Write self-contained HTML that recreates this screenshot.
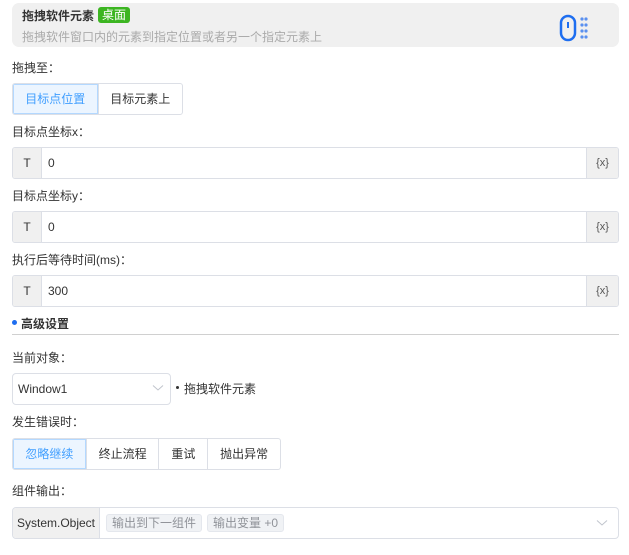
<!DOCTYPE html>
<html><head><meta charset="utf-8"><style>
*{box-sizing:border-box;margin:0;padding:0}
body{width:629px;height:555px;background:#fff;font-family:"Liberation Sans","Noto Sans CJK SC",sans-serif;font-size:12px;color:#333;position:relative;overflow:hidden}
.a{position:absolute}
.lbl{position:absolute;left:12px;font-size:12px;color:#333}
.inp{position:absolute;left:12px;width:607px;height:32px;border:1px solid #dcdfe6;border-radius:3px;overflow:hidden}
.inp .t{position:absolute;left:0;top:0;width:29px;height:30px;background:#f0f0f0;border-right:1px solid #dcdfe6;text-align:center;line-height:30px;color:#333;font-weight:normal}
.inp .v{position:absolute;left:35px;top:0;line-height:30px;color:#333}
.inp .x{position:absolute;right:0;top:0;width:32px;height:30px;background:#f0f0f0;border-left:1px solid #dcdfe6;text-align:center;line-height:30px;color:#555;font-size:11px}
.bg{position:absolute;display:flex;border:1px solid #dcdfe6;border-radius:3px;overflow:hidden;height:32px}
.bg div{line-height:30px;text-align:center;border-left:1px solid #dcdfe6;color:#333}
.bg div:first-child{border-left:none;background:#ecf5ff;color:#409eff;box-shadow:inset 0 0 0 1px #b3d8ff}
</style></head><body>
<div class="a" style="left:12px;top:3px;width:607px;height:44px;background:#f0f0f0;border-radius:7px"></div>
<div class="a" style="left:22px;top:7px;font-weight:bold;font-size:12px;color:#333">拖拽软件元素</div>
<div class="a" style="left:98px;top:7px;width:32px;height:16px;background:#3cb521;border-radius:3px;color:#fff;font-size:12px;line-height:16px;text-align:center">桌面</div>
<div class="a" style="left:22px;top:28px;color:#aaa;font-size:12px">拖拽软件窗口内的元素到指定位置或者另一个指定元素上</div>
<svg class="a" style="left:558px;top:14px" width="34" height="28" viewBox="0 0 34 28">
<rect x="3" y="2" width="14" height="24" rx="7" fill="none" stroke="#1e6ef0" stroke-width="2.5"/>
<line x1="10" y1="8" x2="10" y2="14" stroke="#1e6ef0" stroke-width="2"/>
<g fill="#5a90ef"><circle cx="24" cy="5" r="1.6"/><circle cx="28" cy="5" r="1.6"/><circle cx="24" cy="11" r="1.6"/><circle cx="28" cy="11" r="1.6"/><circle cx="24" cy="17" r="1.6"/><circle cx="28" cy="17" r="1.6"/><circle cx="24" cy="23" r="1.6"/><circle cx="28" cy="23" r="1.6"/></g>
</svg>
<div class="lbl" style="top:59px">拖拽至：</div>
<div class="bg" style="left:12px;top:83px;width:171px"><div style="width:85px">目标点位置</div><div style="width:85px">目标元素上</div></div>
<div class="lbl" style="top:123px">目标点坐标x：</div>
<div class="inp" style="top:147px"><div class="t">T</div><div class="v">0</div><div class="x">{x}</div></div>
<div class="lbl" style="top:187px">目标点坐标y：</div>
<div class="inp" style="top:211px"><div class="t">T</div><div class="v">0</div><div class="x">{x}</div></div>
<div class="lbl" style="top:251px">执行后等待时间(ms)：</div>
<div class="inp" style="top:275px"><div class="t">T</div><div class="v">300</div><div class="x">{x}</div></div>
<div class="a" style="left:12px;top:320px;width:5px;height:5px;border-radius:50%;background:#1e6ef0"></div>
<div class="a" style="left:21px;top:315px;font-weight:bold;color:#333">高级设置</div>
<div class="a" style="left:12px;top:334px;width:607px;height:1px;background:#d0d0d0"></div>
<div class="lbl" style="top:349px">当前对象：</div>
<div class="a" style="left:12px;top:373px;width:159px;height:32px;border:1px solid #dcdfe6;border-radius:4px"></div>
<div class="a" style="left:18px;top:382px;color:#333">Window1</div>
<svg class="a" style="left:152px;top:384px" width="12" height="8"><path d="M1 1.5 L6 6 L11 1.5" fill="none" stroke="#c0c4cc" stroke-width="1"/></svg>
<div class="a" style="left:176px;top:386px;width:3px;height:3px;border-radius:50%;background:#333"></div>
<div class="a" style="left:184px;top:380px;color:#333">拖拽软件元素</div>
<div class="lbl" style="top:413px">发生错误时：</div>
<div class="bg" style="left:12px;top:438px;width:269px"><div style="width:73px">忽略继续</div><div style="width:73px">终止流程</div><div style="width:49px">重试</div><div style="width:73px">抛出异常</div></div>
<div class="lbl" style="top:482px">组件输出：</div>
<div class="a" style="left:12px;top:507px;width:607px;height:32px;border:1px solid #dcdfe6;border-radius:4px;overflow:hidden">
<div class="a" style="left:0;top:0;width:87px;height:30px;background:#f0f0f0;border-right:1px solid #dcdfe6;line-height:30px;text-align:center;color:#333">System.Object</div>
<div class="a" style="left:93px;top:6px;height:18px;padding:0 5px;background:#f0f2f5;border:1px solid #e4e7ed;border-radius:3px;color:#909399;line-height:16px">输出到下一组件</div>
<div class="a" style="left:194px;top:6px;height:18px;padding:0 5px;background:#f0f2f5;border:1px solid #e4e7ed;border-radius:3px;color:#909399;line-height:16px">输出变量 +0</div>
<svg class="a" style="left:583px;top:11px" width="12" height="8"><path d="M1 1.5 L6 6 L11 1.5" fill="none" stroke="#c0c4cc" stroke-width="1"/></svg>
</div>
</body></html>
